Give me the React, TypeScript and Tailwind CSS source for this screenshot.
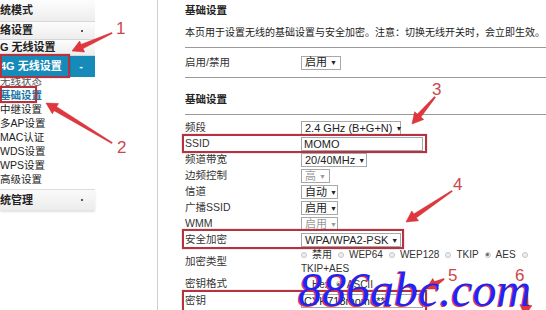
import React from "react";

const font = "font-['Liberation_Sans','Noto_Sans_CJK_SC',sans-serif]";

// tapered red annotation arrow, tail -> head
const arrowPoints = (x1: number, y1: number, x2: number, y2: number) => {
  const dx = x2 - x1;
  const dy = y2 - y1;
  const len = Math.hypot(dx, dy);
  const ux = dx / len;
  const uy = dy / len;
  const nx = -uy;
  const ny = ux;
  const hl = 11;
  const hw = 6;
  const bx = x2 - ux * hl;
  const by = y2 - uy * hl;
  const p = (x: number, y: number) => `${x.toFixed(1)},${y.toFixed(1)}`;
  return [
    p(x1 + nx * 0.6, y1 + ny * 0.6),
    p(bx + nx * 2.3, by + ny * 2.3),
    p(bx + nx * hw, by + ny * hw),
    p(x2, y2),
    p(bx - nx * hw, by - ny * hw),
    p(bx - nx * 2.3, by - ny * 2.3),
    p(x1 - nx * 0.6, y1 - ny * 0.6),
  ].join(" ");
};

const arrows = [
  [112, 33, 72, 51],
  [112, 143, 46, 103],
  [435, 97, 412, 124],
  [452, 191, 406, 222],
  [444, 279, 426, 289],
  [527, 291, 525, 316],
];

const numbers = [
  { n: "1", x: 116, y: 20 },
  { n: "2", x: 117, y: 139 },
  { n: "3", x: 432, y: 81 },
  { n: "4", x: 453, y: 176 },
  { n: "5", x: 448, y: 267 },
  { n: "6", x: 515, y: 267 },
];

const Sel = ({ children, w, off }: { children: React.ReactNode; w: string; off?: boolean }) => (
  <div
    className={`flex h-[14px] ${w} shrink-0 items-center justify-between gap-[3px] whitespace-nowrap border border-[#a8a8a8] bg-white px-[3px] text-[11px] leading-none ${
      off ? "text-[#9a9a9a]" : "text-[#222]"
    }`}
  >
    <span className="whitespace-nowrap">{children}</span>
    <span className="shrink-0 text-[7px]">▼</span>
  </div>
);

const Radio = ({ on }: { on?: boolean }) => (
  <span className="flex h-[6px] w-[6px] shrink-0 items-center justify-center rounded-full border border-[#c4c4c4] bg-[#efefef]">
    {on && <span className="h-[3px] w-[3px] rounded-full bg-[#666]" />}
  </span>
);

const Row = ({ label, h = "h-[16px]", children }: { label: string; h?: string; children: React.ReactNode }) => (
  <div className={`relative flex ${h} items-center`}>
    <div className="w-[116px] shrink-0 whitespace-nowrap text-[10.5px] text-[#333]">{label}</div>
    {children}
  </div>
);

const RedBox = ({ cls }: { cls: string }) => (
  <span className={`pointer-events-none absolute border-2 border-[#b5333f] shadow-[0_0_1px_rgba(120,0,0,0.5)] ${cls}`} />
);

const subItems = ["中继设置", "多AP设置", "MAC认证", "WDS设置", "WPS设置", "高级设置"];

export default function App() {
  return (
    <div className={`relative flex h-[310px] w-[546px] overflow-hidden bg-white text-[#222] ${font}`}>
      {/* left menu */}
      <aside className="w-[158px] shrink-0 border-r border-[#cfcfcf]">
        <div className="w-[95px]">
          <div className="flex h-[22px] items-center border-b border-[#d6d6d6] bg-linear-to-b from-[#fdfdfd] to-[#ededed] text-[11px] font-bold">
            统模式
          </div>
          <div className="flex h-[18px] items-center justify-between border-b border-[#d6d6d6] bg-linear-to-b from-[#fdfdfd] to-[#ededed] pr-[12px] text-[11px] font-bold">
            <span>络设置</span>
            <span className="h-[2px] w-[2px] rounded-full bg-[#222]" />
          </div>
          <div className="flex h-[16px] items-center border-b border-[#d6d6d6] bg-linear-to-b from-[#fdfdfd] to-[#ededed] text-[11px] font-bold">
            <span>G 无线设置</span>
          </div>
          <div className="relative z-10 flex h-[21px] items-center justify-between bg-[#168ab9] pr-[12px] text-[11px] font-bold text-white">
            <span>4G 无线设置</span>
            <span>-</span>
            <RedBox cls="-top-[2px] left-0 h-[24px] w-[70px]" />
          </div>
          <div className="text-[10.5px] leading-[14px]">
            <div className="-mt-[3px] h-[14px] overflow-hidden text-[#555]">无线状态</div>
            <div className="relative h-[14px] font-bold text-[#1b78a4]">
              <span>基础设置</span>
              <RedBox cls="-top-[2px] left-0 h-[17px] w-[37px]" />
            </div>
            {subItems.map((s) => (
              <div key={s} className="h-[14px] whitespace-nowrap">
                {s}
              </div>
            ))}
          </div>
          <div className="mt-[3px] flex h-[21px] items-center justify-between border-t border-[#dcdcdc] bg-linear-to-b from-[#fafafa] to-[#ececec] pr-[12px] text-[11px] font-bold shadow-[0_2px_2px_rgba(0,0,0,0.12)]">
            <span>统管理</span>
            <span className="h-[2px] w-[2px] rounded-full bg-[#222]" />
          </div>
        </div>
      </aside>

      {/* settings form */}
      <main className="flex-1 pl-[27px]">
        <div className="flex h-[21px] items-center text-[10.5px] font-bold">基础设置</div>
        <p className="flex h-[22px] items-center whitespace-nowrap text-[10px]">
          本页用于设置无线的基础设置与安全加密。注意：切换无线开关时，会立即生效。
        </p>
        <div className="mt-[4px] border-t border-[#9a9a9a]" />
        <Row label="启用/禁用" h="h-[29px]">
          <Sel w="w-[40px]">启用</Sel>
        </Row>
        <div className="border-t border-[#9a9a9a]" />
        <div className="flex h-[36px] items-center pt-[8px] text-[10.5px] font-bold">基础设置</div>
        <div className="border-t border-[#9a9a9a]" />

        <div className="pt-[5px]">
          <Row label="频段">
            <Sel w="w-[100px]">2.4 GHz (B+G+N)</Sel>
          </Row>
          <Row label="SSID">
            <div className="flex h-[14px] w-[122px] items-center border border-[#a8a8a8] px-[2px] text-[11px]">MOMO</div>
            <RedBox cls="-top-[2px] -left-[3px] h-[19px] w-[245px]" />
          </Row>
          <Row label="频道带宽">
            <Sel w="w-[66px]">20/40MHz</Sel>
          </Row>
          <Row label="边频控制">
            <Sel w="w-[29px]" off>
              高
            </Sel>
          </Row>
          <Row label="信道">
            <Sel w="w-[37px]">自动</Sel>
          </Row>
          <Row label="广播SSID">
            <Sel w="w-[37px]">启用</Sel>
          </Row>
          <Row label="WMM">
            <Sel w="w-[37px]" off>
              启用
            </Sel>
          </Row>
          <Row label="安全加密">
            <Sel w="w-[100px]">WPA/WPA2-PSK</Sel>
            <RedBox cls="-top-[3px] -left-[3px] h-[20px] w-[222px]" />
          </Row>
          <Row label="加密类型" h="h-[28px]">
            <div className="whitespace-nowrap text-[10px] text-[#333]">
              <div className="flex h-[13px] items-center">
                <Radio />
                <span className="ml-[5px]">禁用</span>
                <span className="ml-[6px]"><Radio /></span>
                <span className="ml-[5px]">WEP64</span>
                <span className="ml-[6px]"><Radio /></span>
                <span className="ml-[5px]">WEP128</span>
                <span className="ml-[6px]"><Radio /></span>
                <span className="ml-[5px]">TKIP</span>
                <span className="ml-[6px]"><Radio on /></span>
                <span className="ml-[5px]">AES</span>
                <span className="ml-[6px]"><Radio /></span>
              </div>
              <div className="flex h-[15px] items-center">TKIP+AES</div>
            </div>
          </Row>
          <Row label="密钥格式">
            <div className="flex items-center whitespace-nowrap text-[10px] text-[#333]">
              <Radio />
              <span className="ml-[5px]">Hex</span>
              <span className="ml-[6px]"><Radio on /></span>
              <span className="ml-[5px]">ASCII</span>
            </div>
          </Row>
          <Row label="密钥" h="h-[18px]">
            <div className="flex h-[14px] w-[122px] items-center whitespace-nowrap border border-[#a8a8a8] px-[2px] text-[11px]">CYH718momo**</div>
            <RedBox cls="-top-[2px] -left-[3px] h-[22px] w-[245px]" />
          </Row>
        </div>
      </main>

      {/* annotations */}
      <svg className="pointer-events-none absolute left-0 top-0" width="546" height="310" viewBox="0 0 546 310">
        {arrows.map(([a, b, c, d], i) => (
          <polygon key={i} points={arrowPoints(a, b, c, d)} fill="#e1363d" stroke="#c22a31" strokeWidth="0.5" />
        ))}
      </svg>
      {numbers.map((n) => (
        <span
          key={n.n}
          className="absolute text-[17px] leading-none text-[#c9474d] font-['Liberation_Sans',sans-serif]"
          style={{ left: n.x, top: n.y }}
        >
          {n.n}
        </span>
      ))}
      <span className="pointer-events-none absolute left-[298px] top-[266px] font-['Liberation_Serif',serif] text-[48px] italic leading-none text-[#2424f2] [text-shadow:-1px_1px_0_#e0303a]">
        886abc.com
      </span>
    </div>
  );
}
